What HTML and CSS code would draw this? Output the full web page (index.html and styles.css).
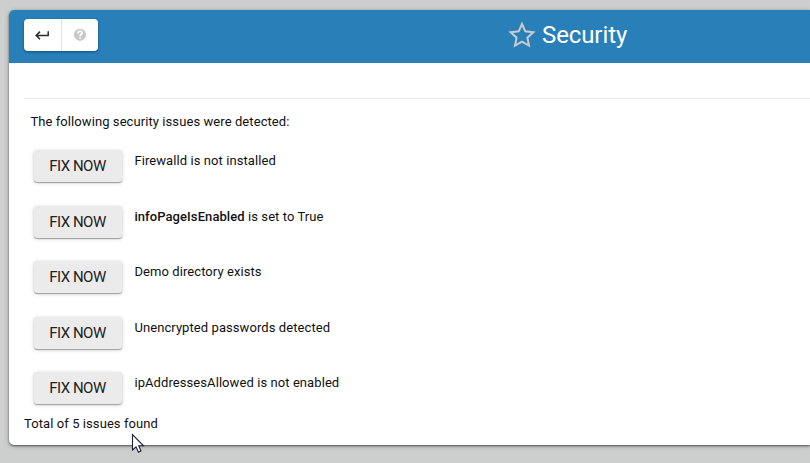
FILE: index.html
```html
<!DOCTYPE html>
<html lang="en">
<head>
<meta charset="utf-8">
<title>Security</title>
<link rel="stylesheet" href="styles.css">
</head>
<body>
<main class="panel">
  <header class="header">
    <div class="tools">
      <button class="tool" aria-label="Back"><svg width="16" height="16" viewBox="0 0 16 16"><path d="M14.2 4.2V8.4H2.4M6 4.6L2.2 8.4L6 12.2" fill="none" stroke="#2b2b2b" stroke-width="1.5"/></svg></button>
      <button class="tool" aria-label="Help"><svg width="14" height="14" viewBox="0 0 14 14"><circle cx="7" cy="6.8" r="6.1" fill="#c8c8c8"/><path d="M4.9 5.5C4.9 2.6 9.1 2.6 9.1 5.1C9.1 6.6 7.1 6.5 7.1 8.2M7.1 9.2V10.8" fill="none" stroke="#fff" stroke-width="1.7"/></svg></button>
    </div>
    <h1 class="title"><svg class="star" width="28" height="28" viewBox="0 0 28 28"><path d="M14 3L17.3 10.3L25.3 11.2L19.4 16.7L21 24.5L14 20.6L7 24.5L8.6 16.7L2.7 11.2L10.7 10.3Z" fill="none" stroke="#c9cbcc" stroke-width="2"/></svg><span>Security</span></h1>
  </header>
  <section class="content">
    <p class="intro">The following security issues were detected:</p>
    <ul class="issues">
      <li class="issue"><button class="fix">FIX NOW</button><span>Firewalld is not installed</span></li>
      <li class="issue"><button class="fix">FIX NOW</button><span><b>infoPageIsEnabled</b> is set to True</span></li>
      <li class="issue"><button class="fix">FIX NOW</button><span>Demo directory exists</span></li>
      <li class="issue"><button class="fix">FIX NOW</button><span>Unencrypted passwords detected</span></li>
      <li class="issue"><button class="fix">FIX NOW</button><span>ipAddressesAllowed is not enabled</span></li>
    </ul>
    <p class="total">Total of 5 issues found</p>
  </section>
</main>
<svg class="cursor" width="14" height="21" viewBox="0 0 14 21"><path d="M1.5 1.5V17L5 13.8L7.5 19.2L10 18L7.7 12.8H12.5Z" fill="#fff" stroke="#1c1c3c" stroke-width="1.1"/></svg>
</body>
</html>
```
FILE: styles.css
```css
* { box-sizing: border-box; }
body {
  margin: 0;
  height: 463px;
  overflow: hidden;
  background: #cdcfce;
  color: #111;
  font: 13px/20px Roboto, sans-serif;
  letter-spacing: .08px;
  padding: 10px 0 0 9px;
}
.panel {
  height: 435px;
  background: #fff;
  border-radius: 5px 0 0 5px;
  box-shadow: 0 1px 2px rgba(0,0,0,.5), 0 1px 5px rgba(0,0,0,.25);
}
.header {
  display: flex;
  align-items: center;
  height: 53px;
  padding: 0 0 0 15px;
  background: #2980b9;
  border-radius: 5px 0 0 0;
}
.tools {
  display: flex;
  width: 74px;
  height: 32px;
  margin-bottom: 3px;
  background: #fff;
  border-radius: 4px;
  box-shadow: 0 1px 3px rgba(0,0,0,.4);
}
.tool {
  display: flex;
  flex: 1;
  align-items: center;
  justify-content: center;
  padding: 0;
  border: 0;
  background: none;
}
.tool + .tool { border-left: 1px solid #e2e2e2; }
.title {
  display: flex;
  align-items: center;
  gap: 6px;
  margin: 0 0 3px 410px;
  color: #fff;
  font-size: 24px;
  font-weight: 400;
  letter-spacing: -.1px;
  line-height: 30px;
}
.content {
  margin: 35px 0 0 15px;
  border-top: 1px solid #e8e8e8;
}
.intro { margin: 13px 0 0 6.4px; }
.issues { margin: 18px 0 0 10px; padding: 0; list-style: none; }
.issue { display: flex; gap: 12.4px; height: 55.6px; }
.issue span { padding-top: 1px; }
.fix {
  width: 88px;
  height: 32px;
  padding: 0 1px 0 0;
  border: 0;
  border-radius: 3px;
  background: #ebebeb;
  color: #212121;
  font: 15px/32px Roboto, sans-serif;
  letter-spacing: -.5px;
  box-shadow: 0 1px 1px rgba(0,0,0,.3), 0 1px 4px rgba(0,0,0,.18);
}
.issue:last-child { height: 42px; }
.total { margin: 0; }
b { font-weight: 500; }
.cursor { position: absolute; left: 131px; top: 433px; }
```
